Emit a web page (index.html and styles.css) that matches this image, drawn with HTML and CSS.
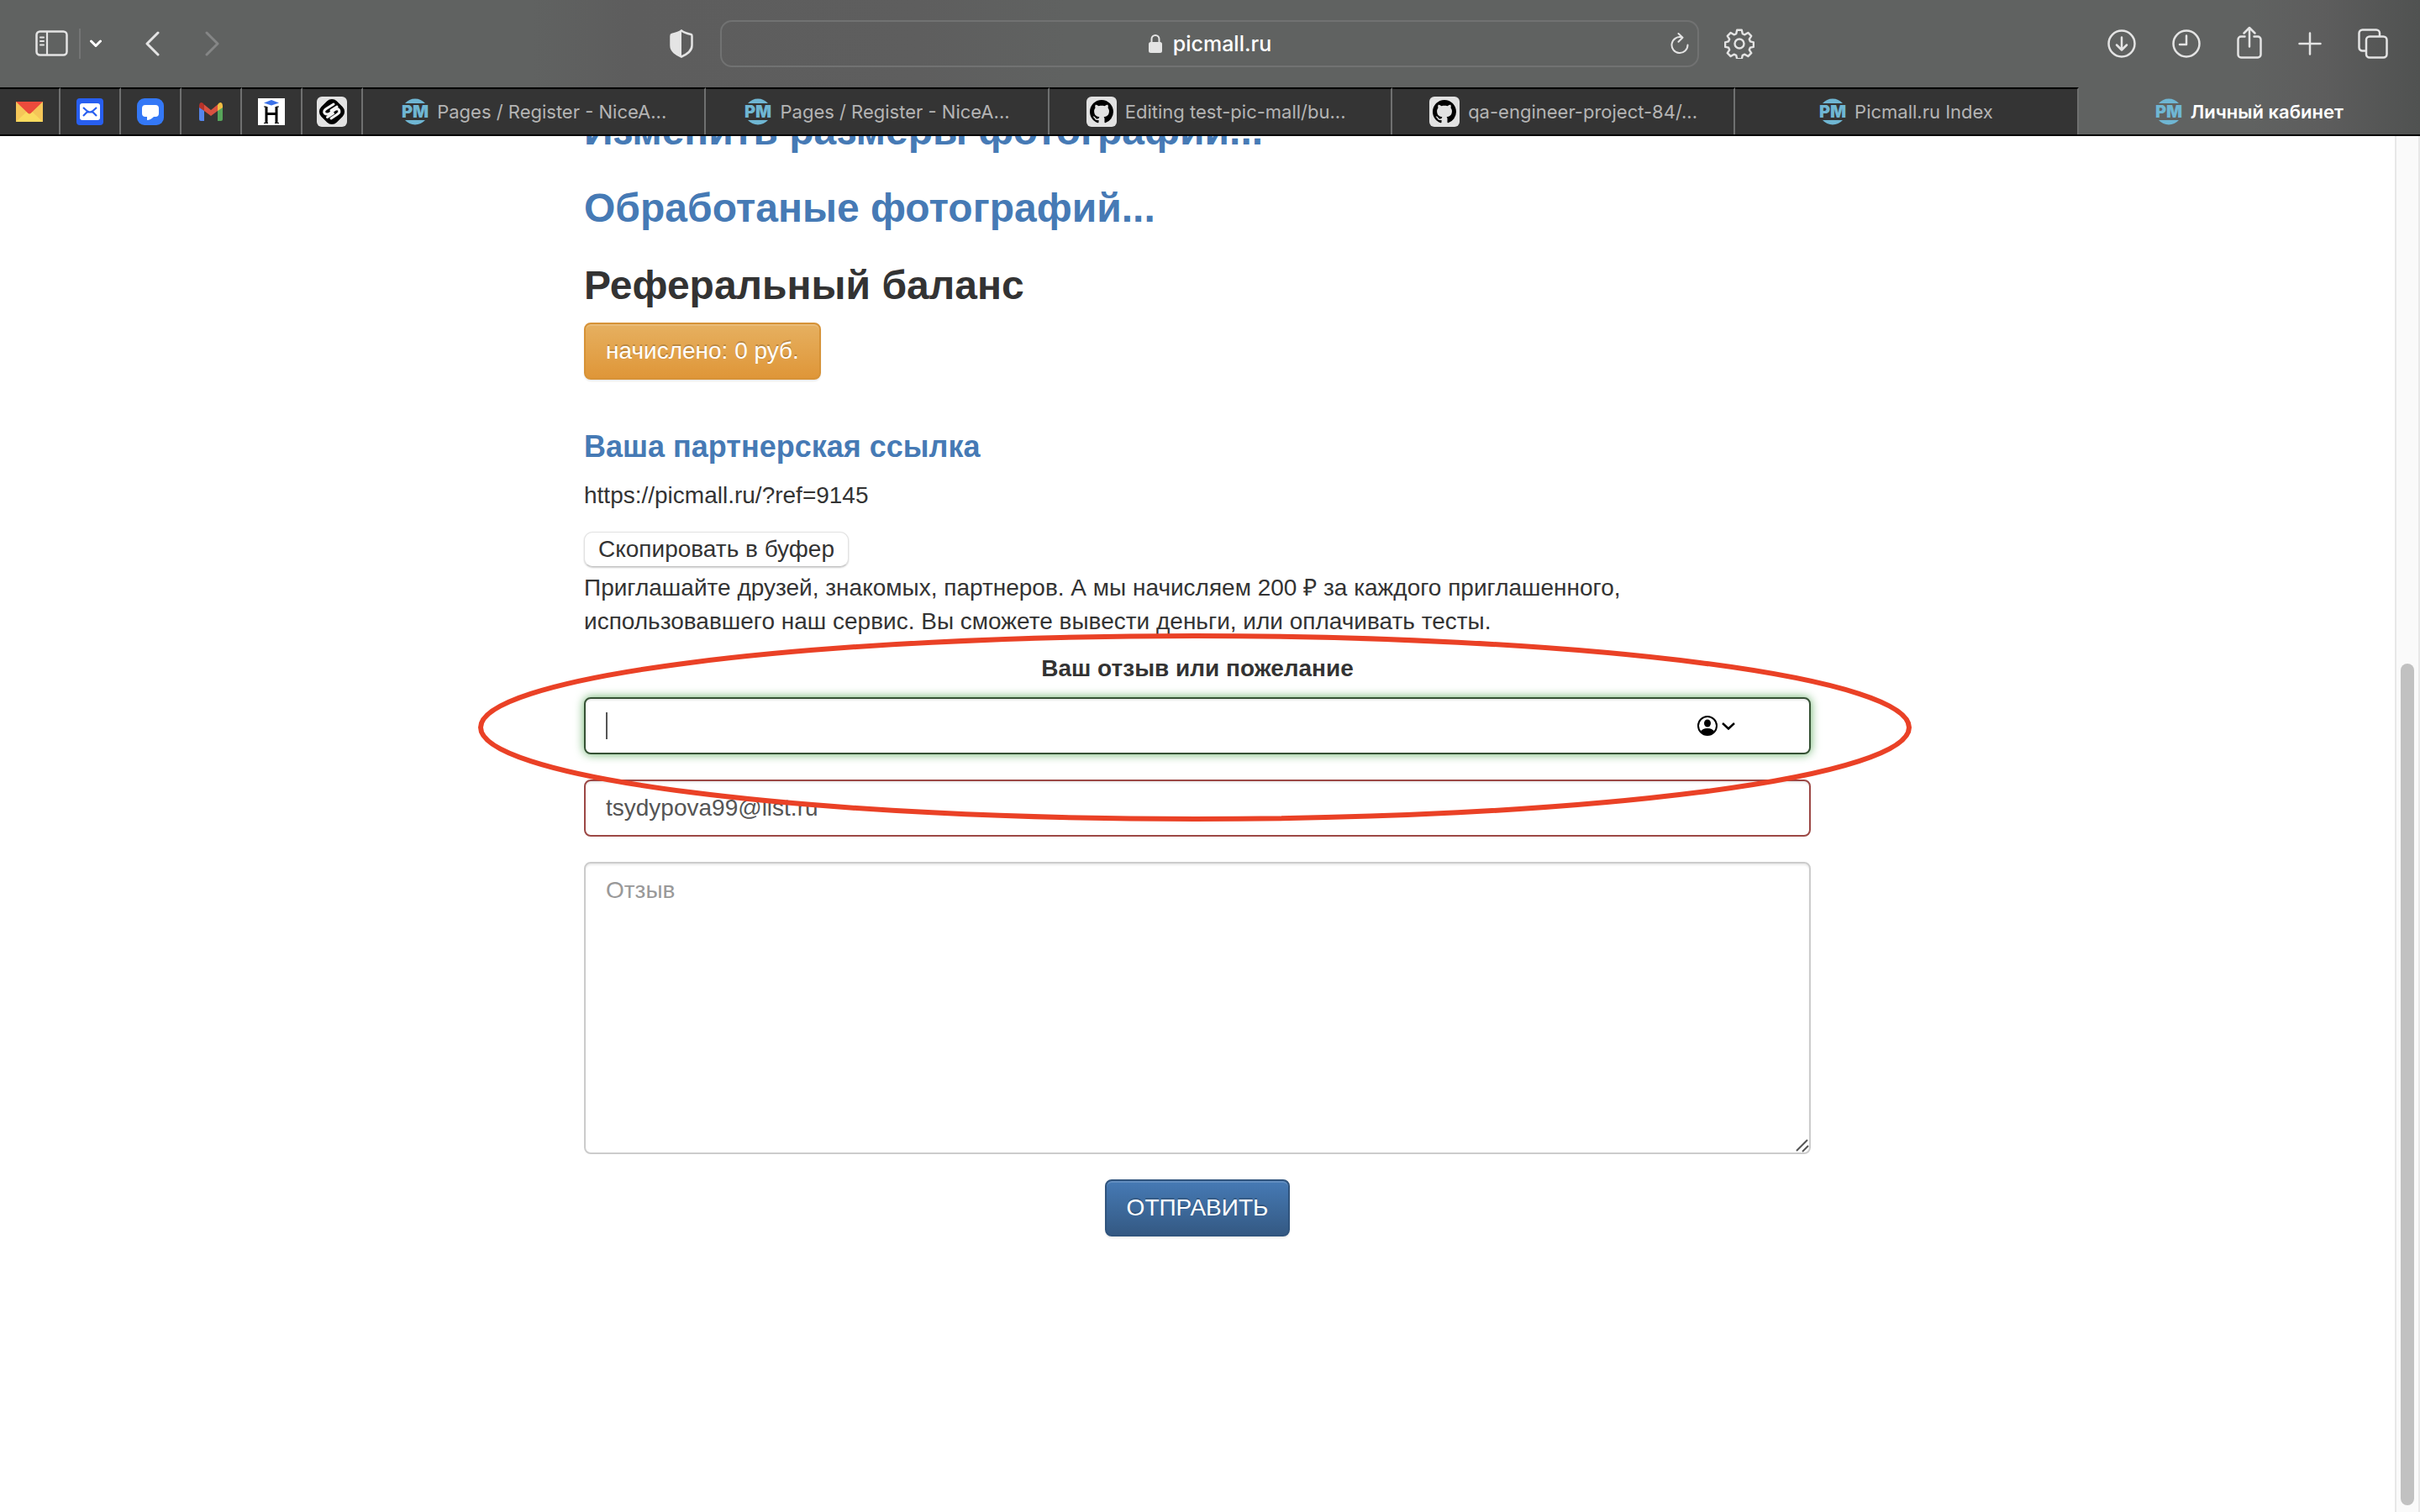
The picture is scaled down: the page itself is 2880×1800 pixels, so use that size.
FILE: index.html
```html
<!DOCTYPE html>
<html lang="ru">
<head>
<meta charset="utf-8">
<meta name="viewport" content="width=device-width, initial-scale=1">
<title>Личный кабинет</title>
<link rel="stylesheet" href="styles.css">
</head>
<body>
<svg class="defs" aria-hidden="true">
  <symbol id="github" viewBox="0 0 36 36">
    <rect width="36" height="36" rx="6" fill="#e2e2e2"/>
    <path transform="translate(4 4) scale(1.75)" d="M8 0C3.58 0 0 3.58 0 8c0 3.54 2.29 6.53 5.47 7.59.4.07.55-.17.55-.38 0-.19-.01-.82-.01-1.49-2.01.37-2.53-.49-2.69-.94-.09-.23-.48-.94-.82-1.13-.28-.15-.68-.52-.01-.53.63-.01 1.08.58 1.23.82.72 1.21 1.87.87 2.33.66.07-.52.28-.87.51-1.07-1.78-.2-3.64-.89-3.64-3.95 0-.87.31-1.59.82-2.15-.08-.2-.36-1.02.08-2.12 0 0 .67-.21 2.2.82.64-.18 1.32-.27 2-.27s1.36.09 2 .27c1.53-1.04 2.2-.82 2.2-.82.44 1.1.16 1.92.08 2.12.51.56.82 1.27.82 2.15 0 3.07-1.87 3.75-3.65 3.95.29.25.54.73.54 1.48 0 1.07-.01 1.93-.01 2.2 0 .21.15.46.55.38A8.01 8.01 0 0 0 16 8c0-4.42-3.58-8-8-8z"/>
  </symbol>
</svg>

<header class="browser">
  <div class="toolbar">
    <div class="tools tools-left">
      <button class="tool" aria-label="Боковое меню"><svg width="40" height="32" viewBox="0 0 40 32" fill="none" stroke="currentColor"><rect x="1.5" y="1.5" width="36" height="28" rx="4" stroke-width="2.500"/><path d="M14 2v28" stroke-width="2.200"/><path d="M6 8.500h4M6 13h4M6 17.500h4" stroke-width="2" stroke-linecap="round"/></svg></button>
      <span class="tool-divider"></span>
      <button class="tool" aria-label="Группы вкладок"><svg width="14" height="10" viewBox="0 0 14 10" fill="none" stroke="#fff" stroke-width="3" stroke-linecap="round" stroke-linejoin="round"><path d="M1.500 2 7 7.500 12.500 2"/></svg></button>
      <button class="tool tool-nav" aria-label="Назад"><svg width="18" height="30" viewBox="0 0 18 30" fill="none" stroke="currentColor" stroke-width="3" stroke-linecap="round" stroke-linejoin="round"><path d="M15 2 2 15l13 13"/></svg></button>
      <button class="tool tool-nav" aria-label="Вперёд" disabled><svg width="18" height="30" viewBox="0 0 18 30" fill="none" stroke="currentColor" stroke-width="3" stroke-linecap="round" stroke-linejoin="round"><path d="m3 2 13 13L3 28"/></svg></button>
      <button class="tool tool-shield" aria-label="Отчёт о конфиденциальности"><svg width="28" height="34" viewBox="0 0 28 34"><path d="M14 1.500C11 4 7 5 2.500 6 1.500 6.300 1.500 7 1.500 8v11c0 7 6 10.500 12.500 13.500C20.500 29.500 26.500 26 26.500 19V8c0-1 0-1.700-1-2C21 5 17 4 14 1.500z" fill="none" stroke="currentColor" stroke-width="2.500"/><path d="M14 1.500C11 4 7 5 2.500 6 1.500 6.300 1.500 7 1.500 8v11c0 7 6 10.500 12.500 13.500z" fill="currentColor"/></svg></button>
    </div>
    <div class="address">
      <svg class="lock" width="18" height="24" viewBox="0 0 18 24"><rect x="1" y="10" width="16" height="13" rx="2.500" fill="currentColor"/><path d="M4.500 11V6.500a4.500 4.500 0 0 1 9 0V11" fill="none" stroke="currentColor" stroke-width="2"/></svg>
      <span>picmall.ru</span>
      <button class="tool reload" aria-label="Обновить"><svg width="22" height="26" viewBox="0 0 22 26" fill="none" stroke="currentColor" stroke-width="2" stroke-linecap="round" stroke-linejoin="round"><path d="M13.500 5.400A9.500 9.500 0 1 0 20.500 14.500M9.500 1l5 4.700-5 5"/></svg></button>
    </div>
    <div class="tools tools-right">
      <button class="tool" aria-label="Настройки"><svg width="36" height="36" viewBox="0 0 36 36" fill="none" stroke="currentColor" stroke-width="2.400" stroke-linejoin="round"><path d="M15.200 1.800h5.600l1 4.400 2.600 1.100 3.900-2.400 3.900 3.900-2.400 3.900 1.100 2.600 4 1v5.500l-4 .9-1.100 2.600 2.400 3.900-3.900 3.900-3.900-2.400-2.600 1.100-1 4.400h-5.600l-1-4.400-2.600-1.100-3.900 2.400-3.900-3.900 2.400-3.900-1.100-2.600-4-.9v-5.500l4-1 1.100-2.600-2.400-3.900 3.900-3.900 3.900 2.400 2.600-1.100z"/><circle cx="18" cy="18" r="5.500"/></svg></button>
      <button class="tool tool-first" aria-label="Загрузки"><svg width="34" height="34" viewBox="0 0 34 34" fill="none" stroke="currentColor" stroke-width="2.500" stroke-linecap="round" stroke-linejoin="round"><circle cx="17" cy="17" r="15.500"/><path d="M17 9.500V24M11 18.500l6 6 6-6"/></svg></button>
      <button class="tool" aria-label="История"><svg width="34" height="34" viewBox="0 0 34 34" fill="none" stroke="currentColor" stroke-width="2.500" stroke-linecap="round" stroke-linejoin="round"><circle cx="17" cy="17" r="15.500"/><path d="M17 7.500V18H9"/></svg></button>
      <button class="tool" aria-label="Поделиться"><svg width="30" height="42" viewBox="0 0 30 42" fill="none" stroke="currentColor" stroke-width="2.500" stroke-linecap="round" stroke-linejoin="round"><path d="M9.500 12.500H5A3.500 3.500 0 0 0 1.500 16v18A3.500 3.500 0 0 0 5 37.500h20a3.500 3.500 0 0 0 3.500-3.500V16a3.500 3.500 0 0 0-3.500-3.500h-4.500M15 24.500V2.500M8.500 8.500 15 2l6.500 6.500"/></svg></button>
      <button class="tool" aria-label="Новая вкладка"><svg width="28" height="28" viewBox="0 0 28 28" fill="none" stroke="currentColor" stroke-width="2.500" stroke-linecap="round"><path d="M14 1.500v25M1.500 14h25"/></svg></button>
      <button class="tool" aria-label="Обзор вкладок"><svg width="36" height="36" viewBox="0 0 36 36" fill="none" stroke="currentColor" stroke-width="2.500" stroke-linejoin="round"><rect x="10" y="9.500" width="24.500" height="25" rx="4"/><path d="M10 26.500H5.500a4 4 0 0 1-4-4v-17a4 4 0 0 1 4-4H22a4 4 0 0 1 4 4v4"/></svg></button>
    </div>
  </div>
  <nav class="tabs">
    <a class="tab pinned" href="#" aria-label="Яндекс Почта"><svg width="32" height="24" viewBox="0 0 32 24"><path fill="#f5c658" d="M0 0h32v24H0z"/><path fill="#fadb5f" d="M0 24 16 9l16 15z"/><path fill="#ec4b3c" d="M0 0h32L18 13.500q-2 2-4 0z"/></svg></a>
    <a class="tab pinned" href="#" aria-label="Почта"><svg width="32" height="32" viewBox="0 0 32 32"><rect width="32" height="32" rx="4" fill="#285ff0"/><rect x="4" y="6" width="24" height="20" rx="3" fill="#fff"/><path d="m8 11 5 4.500q3 2 6 0l5-4.500M8 21l5-5M24 21l-5-5" fill="none" stroke="#285ff0" stroke-width="2.200"/></svg></a>
    <a class="tab pinned" href="#" aria-label="Сообщения"><svg width="32" height="32" viewBox="0 0 32 32"><rect width="32" height="32" rx="9" fill="#3478f6"/><path fill="#fff" d="M10 8h12q4 0 4 4v6q0 4-4 4h-2q-4 4-8 4v-4h-2q-4 0-4-4v-6q0-4 4-4z"/></svg></a>
    <a class="tab pinned" href="#" aria-label="Gmail"><svg width="32" height="32" viewBox="0 0 32 32"><path fill="#5585ec" d="M2 10v15q0 2 2 2h4V14z"/><path fill="#57a55a" d="M24 14v13h4q2 0 2-2V10z"/><path fill="#f2bd42" d="M24 15V8q1-3 4-3 2 1 2 4v2z"/><path fill="#b5332a" d="M8 15V8Q7 5 4 5 2 6 2 9v2z"/><path fill="#d95140" d="M8 7.500 16 14l8-6.500V15l-8 6-8-6z"/></svg></a>
    <a class="tab pinned" href="#" aria-label="Hexlet"><svg width="32" height="32" viewBox="0 0 32 32"><path fill="#fff" d="M0 0h32v32H0z"/><path fill="#3b71e8" d="m7 5.500 9-3.500 9 3.500-9 3z"/><path d="M10 10v20M22 10v20M10 18.500h12" fill="none" stroke="#000" stroke-width="3"/><path d="M7 29.500h5M20 29.500h5M7 10h3M22 10h3" fill="none" stroke="#000" stroke-width="1"/></svg></a>
    <a class="tab pinned" href="#" aria-label="Сервис"><svg width="36" height="36" viewBox="0 0 36 36"><rect width="36" height="36" rx="6" fill="#e2e2e2"/><rect x="5" y="5" width="26" height="26" rx="8" transform="rotate(45 18 18)"/><path d="m20 9-8 5q-5 3-2.500 6 2.500 2 6 0l6-4.500q3.500-2 5 .5 1.500 3-2 5L17 26M24 12l-7 4.500M12.500 24.500l7-4.500" fill="none" stroke="#f4f4f4" stroke-width="3" stroke-linecap="round"/></svg></a>
    <a class="tab" href="#"><svg class="pm" width="32" height="32" viewBox="0 0 32 32"><path d="M4 6a16 16 0 0 1 24 0zM4 26a16 16 0 0 0 24 0z"/><text x="16" y="23" text-anchor="middle">PM</text></svg><span class="tab-title tab-title-cut">Pages / Register - NiceA...</span></a>
    <a class="tab" href="#"><svg class="pm" width="32" height="32" viewBox="0 0 32 32"><path d="M4 6a16 16 0 0 1 24 0zM4 26a16 16 0 0 0 24 0z"/><text x="16" y="23" text-anchor="middle">PM</text></svg><span class="tab-title tab-title-cut">Pages / Register - NiceA...</span></a>
    <a class="tab" href="#"><svg width="36" height="36"><use href="#github"/></svg><span class="tab-title tab-title-cut">Editing test-pic-mall/bu...</span></a>
    <a class="tab" href="#"><svg width="36" height="36"><use href="#github"/></svg><span class="tab-title tab-title-cut">qa-engineer-project-84/...</span></a>
    <a class="tab" href="#"><svg class="pm" width="32" height="32" viewBox="0 0 32 32"><path d="M4 6a16 16 0 0 1 24 0zM4 26a16 16 0 0 0 24 0z"/><text x="16" y="23" text-anchor="middle">PM</text></svg><span class="tab-title">Picmall.ru Index</span></a>
    <a class="tab tab-active" href="#" aria-current="page"><svg class="pm" width="32" height="32" viewBox="0 0 32 32"><path d="M4 6a16 16 0 0 1 24 0zM4 26a16 16 0 0 0 24 0z"/><text x="16" y="23" text-anchor="middle">PM</text></svg><span class="tab-title">Личный кабинет</span></a>
  </nav>
</header>

<div class="viewport">
  <main class="page">
    <div class="account">
      <h3><a href="#">Изменить размеры фотографий...</a></h3>
      <h3><a href="#">Обработаные фотографий...</a></h3>
      <h3>Реферальный баланс</h3>
      <button class="btn btn-warning" type="button">начислено: 0 руб.</button>
      <h4><a href="#">Ваша партнерская ссылка</a></h4>
      <p>https://picmall.ru/?ref=9145</p>
      <button class="copy" type="button">Скопировать в буфер</button>
      <p>Приглашайте друзей, знакомых, партнеров. А мы начисляем 200 ₽ за каждого приглашенного, использовавшего наш сервис. Вы сможете вывести деньги, или оплачивать тесты.</p>
      <form class="feedback">
        <label for="name">Ваш отзыв или пожелание</label>
        <div class="field">
          <input class="control control-valid" id="name" type="text">
          <span class="caret"></span>
          <svg class="autofill" width="46" height="26" viewBox="0 0 46 26"><circle cx="13" cy="13" r="11" fill="none" stroke="#000" stroke-width="2"/><ellipse cx="13" cy="10" rx="4" ry="4.500"/><path d="M5 20q2-4 8-4t8 4q-3 4-8 4t-8-4z"/><path d="m31 10 7 6.500L45 10" fill="none" stroke="#000" stroke-width="2.500"/></svg>
        </div>
        <input class="control control-error" type="email" value="tsydypova99@list.ru" aria-label="Email">
        <div class="field">
          <textarea class="control" placeholder="Отзыв" aria-label="Отзыв"></textarea>
          <svg class="grip" width="16" height="16" viewBox="0 0 16 16" fill="none" stroke="#555" stroke-width="2"><path d="M1 14 14 1M8 15l7-7"/></svg>
        </div>
        <button class="btn btn-primary" type="submit">ОТПРАВИТЬ</button>
        <svg class="mark" viewBox="0 0 1708 226" preserveAspectRatio="none"><ellipse cx="854" cy="113" rx="850" ry="109" fill="none" stroke="#ea4126" stroke-width="6" vector-effect="non-scaling-stroke"/></svg>
      </form>
    </div>
  </main>
  <div class="scrollbar"><span class="scroll-gap"></span><span class="scroll-thumb"></span></div>
</div>
</body>
</html>
```
FILE: styles.css
```css
* {
  box-sizing: border-box;
}

body {
  display: flex;
  flex-direction: column;
  height: 100vh;
  margin: 0;
  overflow: hidden;
  background: #fff;
  color: #333;
  font: 28px/40px "Liberation Sans", Arial, sans-serif;
}

button,
input,
textarea {
  font: inherit;
}

a {
  color: #467ab5;
  text-decoration: none;
}

.defs {
  display: none;
}

/* Browser window */

.browser {
  position: relative;
  z-index: 1;
  flex: none;
  border-bottom: 2px solid #000;
  background: linear-gradient(90deg, #606261 22%, #5d5d5d 26%, #5e5e5e 38%, #606261 44%, #606261 93%, #5d5d5d 96%, #505251);
  color: #e4e4e4;
  font-family: Inter, sans-serif;
}

.toolbar {
  display: grid;
  grid-template-columns: 857fr 1165fr 858fr;
  align-items: center;
  height: 104px;
}

.tools {
  display: flex;
  align-items: center;
}

.tools-left {
  padding: 0 32px 0 42px;
}

.tools-right {
  gap: 43px;
  padding: 0 38px 0 30px;
}

.tool {
  display: flex;
  flex: none;
  padding: 0;
  border: 0;
  background: none;
  color: inherit;
}

.tool:disabled {
  color: #858686;
}

.tool-divider {
  width: 2px;
  height: 36px;
  margin: 0 11px 0 12px;
  background: #747575;
}

.tool-nav {
  margin-left: 52px;
}

.tool-shield,
.tool-first {
  margin-left: auto;
}

.address {
  display: flex;
  position: relative;
  align-items: center;
  justify-content: center;
  gap: 12px;
  height: 56px;
  border: 2px solid #717272;
  border-radius: 14px;
  color: #fff;
  font-size: 25px;
  font-weight: 500;
}

.lock {
  color: #e4e4e4;
}

.reload {
  position: absolute;
  right: 10px;
  color: #e4e4e4;
}

.tabs {
  display: flex;
  height: 56px;
}

.tab {
  display: flex;
  flex: 1 1 0;
  align-items: center;
  justify-content: center;
  gap: 10px;
  min-width: 0;
  border-top: 2px solid #000;
  border-right: 2px solid #6f7070;
  background: #343434;
  color: #b4b4b4;
  font-size: 22px;
}

.tab svg {
  flex: none;
}

.pinned {
  flex: 0 0 72px;
}

.tab-active {
  border-top-color: transparent;
  border-right: 0;
  background: none;
  color: #fff;
  font-weight: 600;
}

.tab-title {
  white-space: nowrap;
}

.tab-title-cut {
  width: 272px;
}

.pm {
  fill: #6fb6d3;
  stroke: none;
  font: 900 20px/20px Inter, sans-serif;
}

/* Page */

.viewport {
  display: flex;
  flex: 1;
  min-height: 0;
}

.page {
  flex: 1;
  min-width: 0;
}

/* The page is scrolled: its first heading is partly under the tab bar. */
.account {
  max-width: 1460px;
  margin: -32px auto 0;
}

h3,
h4,
p {
  margin: 0;
}

h3 {
  margin-bottom: 40px;
  font-size: 48px;
  font-weight: 700;
  line-height: 52px;
}

h3:last-of-type {
  margin-bottom: 18px;
}

h4 {
  margin: 60px 0 18px;
  font-size: 36px;
  line-height: 40px;
}

.btn {
  display: block;
  height: 68px;
  padding: 12px 24px;
  border: 2px solid;
  border-radius: 8px;
  color: #fff;
  text-shadow: 0 -2px 0 rgba(0, 0, 0, 0.2);
  box-shadow: inset 0 2px 0 rgba(255, 255, 255, 0.15), 0 2px 2px rgba(0, 0, 0, 0.075);
}

.btn-warning {
  border-color: #d69237;
  background: linear-gradient(#e6b060, #df9638);
}

.btn-primary {
  margin: 0 auto;
  border-color: #30547d;
  background: linear-gradient(#467ab5, #345983);
}

.copy {
  display: block;
  height: 42px;
  margin: 23px 0 5px;
  padding: 0 16px;
  border: 1px solid #e2e2e2;
  border-bottom-color: #c4c4c4;
  border-radius: 10px;
  background: #fff;
  box-shadow: 0 1px 2px rgba(0, 0, 0, 0.2);
  color: #333;
}

.feedback {
  position: relative;
  margin-top: 16px;
}

.feedback label {
  display: block;
  margin-bottom: 14px;
  font-weight: 700;
  text-align: center;
}

.field {
  position: relative;
}

.control {
  display: block;
  width: 100%;
  height: 68px;
  margin-bottom: 30px;
  padding: 12px 24px;
  border: 2px solid #ccc;
  border-radius: 8px;
  outline: 0;
  background: #fff;
  box-shadow: inset 0 2px 2px rgba(0, 0, 0, 0.075);
  color: #555;
}

.control::placeholder {
  color: #999;
}

.control-valid {
  border-color: #355134;
  box-shadow: inset 0 2px 2px rgba(0, 0, 0, 0.075), 0 0 12px #67b168;
}

.control-error {
  border-color: #9c4845;
}

textarea.control {
  height: 348px;
  resize: none;
}

.caret {
  position: absolute;
  top: 18px;
  left: 26px;
  width: 2px;
  height: 32px;
  background: #555;
}

.autofill {
  position: absolute;
  top: 21px;
  right: 90px;
}

.grip {
  position: absolute;
  right: 2px;
  bottom: 2px;
}

/* Hand-drawn highlight round the first field */
.mark {
  position: absolute;
  top: -23px;
  left: -127px;
  width: calc(100% + 248px);
  height: 226px;
  pointer-events: none;
}

.scrollbar {
  display: flex;
  flex: 0 0 30px;
  flex-direction: column;
  align-items: center;
  padding-bottom: 8px;
  border: solid #e8e8e8;
  border-width: 0 2px;
  background: #fafafa;
}

.scroll-gap {
  flex: 628;
}

.scroll-thumb {
  flex: 1002;
  width: 16px;
  border-radius: 8px;
  background: #c1c1c1;
}
```
